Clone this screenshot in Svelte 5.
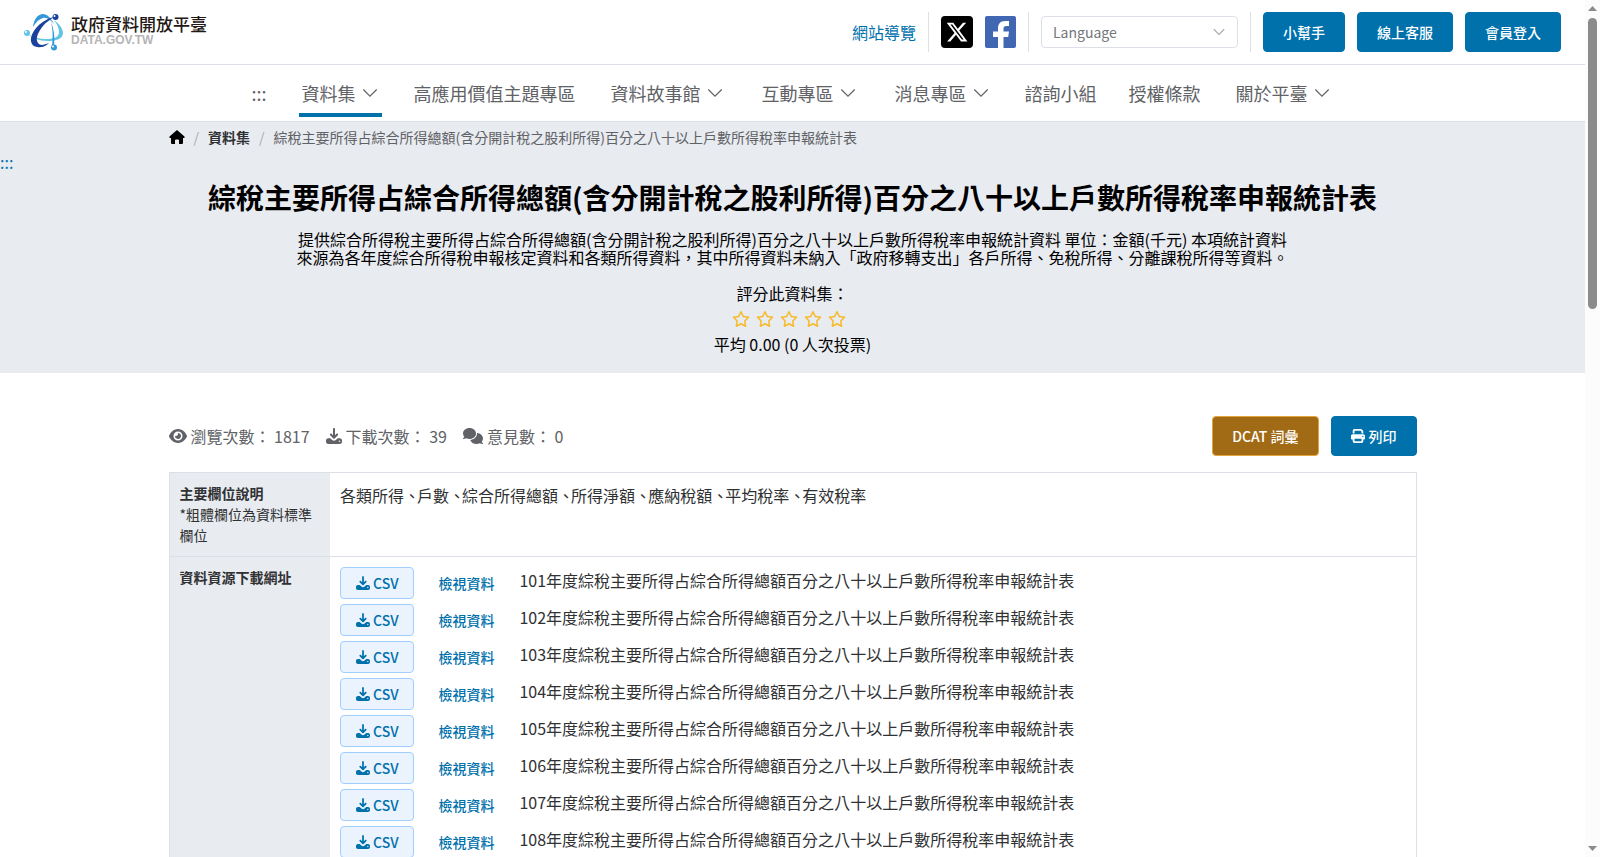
<script>
	const menu = [
		{ label: '資料集', sub: true, active: true },
		{ label: '高應用價值主題專區' },
		{ label: '資料故事館', sub: true },
		{ label: '互動專區', sub: true },
		{ label: '消息專區', sub: true },
		{ label: '諮詢小組' },
		{ label: '授權條款' },
		{ label: '關於平臺', sub: true },
	];

	const title = '綜稅主要所得占綜合所得總額(含分開計稅之股利所得)百分之八十以上戶數所得稅率申報統計表';
	const fields = ['各類所得', '戶數', '綜合所得總額', '所得淨額', '應納稅額', '平均稅率', '有效稅率'];
	const years = [101, 102, 103, 104, 105, 106, 107, 108];
	const stars = [1, 2, 3, 4, 5];

	let score = $state(0);
	let lang = $state('');
</script>

{#snippet chevron()}
	<svg class="chevron" viewBox="0 0 18 18" aria-hidden="true">
		<path d="M2.300 5.500 9 12.200l6.700-6.700" />
	</svg>
{/snippet}

{#snippet download()}
	<svg class="icon" viewBox="0 0 512 512" aria-hidden="true">
		<path d="M288 32c0-17.700-14.300-32-32-32s-32 14.300-32 32V232.700l-45.400-45.400c-12.500-12.500-32.800-12.500-45.300 0s-12.500 32.800 0 45.300l100 100c12.500 12.500 32.800 12.500 45.300 0l100-100c12.500-12.500 12.500-32.800 0-45.300s-32.800-12.500-45.300 0L288 232.700V32zM72 328c-40 0-72 32-72 72v40c0 40 32 72 72 72H440c40 0 72-32 72-72V400c0-40-32-72-72-72H376l-62 58c-32 30-84 30-116 0L136 328H72zm360 68a24 24 0 1 1 0 48 24 24 0 1 1 0-48z" />
	</svg>
{/snippet}

<div class="page">
	<header>
		<a class="logo" href="#home">
			<svg viewBox="0 0 40 37" aria-hidden="true">
				<path d="M9 13C10 5 14 0 19 0c4 0 8 4 11 10-4-5-8-7-11-6-4 1-7 4-10 9z" fill="#3498d8" />
				<path d="M30 6c4 3 9 8 9 13 0 6-7 8-15 8C15 27 8 24 4 20c6 4 12 5 19 5 7 0 12-2 12-7 0-4-2-8-5-12z" fill="#62c4e4" />
				<path d="M30 3C20 5 9 14 7 24c-1 7 4 10 10 9 3 0 6-2 8-4-5 2-9 3-11 0-3-4 0-11 5-17 3-4 7-6 11-9z" fill="#1a429c" />
				<path d="M27 8c3 7 4 15 3 24h-2c1-9 1-16-1-24z" fill="#3498d8" />
				<circle cx="31.500" cy="3" r="3" fill="#1a429c" />
				<circle cx="3" cy="19" r="3" fill="#62c4e4" />
				<circle cx="30" cy="33.500" r="3" fill="#3498d8" />
				<circle cx="30.500" cy="2" r="1" fill="#fff" />
				<circle cx="2" cy="18" r="1" fill="#fff" />
				<circle cx="29" cy="32.500" r="1" fill="#fff" />
			</svg>
			<span class="logo-text">
				<strong>政府資料開放平臺</strong>
				<span>DATA.GOV.TW</span>
			</span>
		</a>

		<div class="tools">
			<a href="#sitemap">網站導覽</a>
			<div class="divider"></div>
			<a class="social" href="#x" aria-label="X">
				<svg viewBox="0 0 32 32">
					<rect width="32" height="32" rx="4" />
					<path transform="translate(4.500 4.500) scale(.96)" fill="#fff" d="M18.244 2.250h3.308l-7.227 8.260 8.502 11.240H16.170l-5.214-6.817L4.990 21.750H1.680l7.730-8.835L1.254 2.250H8.080l4.713 6.231zm-1.161 17.520h1.833L7.084 4.126H5.117z" />
				</svg>
			</a>
			<a class="social facebook" href="#facebook" aria-label="Facebook">
				<svg viewBox="0 0 31 32">
					<rect width="31" height="32" rx="2" fill="#4267b2" />
					<path fill="#fff" d="M13 32V21H8v-5.500h5v-3.300C13 7.800 15.600 5 20 5h4v5h-2.600c-2.100 0-2.900 1-2.900 2.700v2.800H24L23.200 21h-4.700v11z" />
				</svg>
			</a>
			<div class="divider"></div>
			<div class="lang">
				<select aria-label="Language" bind:value={lang}>
					<option value="">Language</option>
					<option value="zh">繁體中文</option>
					<option value="en">English</option>
				</select>
				{@render chevron()}
			</div>
			<div class="divider"></div>
			<button class="btn">小幫手</button>
			<button class="btn">線上客服</button>
			<button class="btn">會員登入</button>
		</div>
	</header>

	<nav>
		<a href="#nav">:::</a>
		{#each menu as item}
			<a href="#menu" class:sub={item.sub} class:active={item.active}>
				{item.label}
				{#if item.sub}
					{@render chevron()}
				{/if}
			</a>
		{/each}
	</nav>

	<section class="banner">
		<div class="container breadcrumb">
			<a href="#home" aria-label="首頁">
				<svg viewBox="0 0 15 14"><path d="M7.500 0 15 6.500V8h-1.500v5q0 1-1 1H9.500v-3.500q0-1-1-1h-2q-1 0-1 1V14h-3q-1 0-1-1V8H0V6.500z" /></svg>
			</a>
			<i>/</i>
			<a href="#dataset">資料集</a>
			<i>/</i>
			<span>{title}</span>
		</div>
		<a class="anchor" href="#main">:::</a>
		<div class="container intro">
			<h1>{title}</h1>
			<p>提供綜合所得稅主要所得占綜合所得總額(含分開計稅之股利所得)百分之八十以上戶數所得稅率申報統計資料 單位：金額(千元) 本項統計資料來源為各年度綜合所得稅申報核定資料和各類所得資料，其中所得資料未納入「政府移轉支出」各戶所得、免稅所得、分離課稅所得等資料。</p>
			<div>評分此資料集：</div>
			<div class="stars">
				{#each stars as n}
					<button aria-label="{n} 分" onclick={() => score = n}>
						<svg viewBox="0 0 576 512">
							<path d="M287.900 0c9.200 0 17.600 5.200 21.600 13.500l68.600 141.300 153.200 22.600c9 1.300 16.500 7.600 19.300 16.300s.5 18.100-5.900 24.500L433.600 328.400l26.200 155.600c1.500 9-2.200 18.100-9.700 23.500s-17.300 6-25.300 1.700l-137-73.200L151 509.100c-8.100 4.300-17.900 3.700-25.300-1.700s-11.200-14.500-9.700-23.500l26.200-155.600L31.100 218.200c-6.500-6.400-8.700-15.900-5.900-24.500s10.300-14.900 19.300-16.300l153.200-22.600L266.300 13.500C270.400 5.200 278.700 0 287.900 0zm0 79L235.400 187.200c-3.500 7.100-10.200 12.100-18.100 13.300L99 217.900 184.900 303c5.500 5.500 8.100 13.300 6.800 21L171.400 443.700l105.200-56.200c7.100-3.800 15.600-3.800 22.600 0l105.200 56.200L384.200 324.100c-1.300-7.700 1.200-15.500 6.800-21l85.900-85.100L358.600 200.500c-7.800-1.200-14.600-6.100-18.100-13.300L287.900 79z" />
						</svg>
					</button>
				{/each}
			</div>
			<div>平均 0.00 (0 人次投票)</div>
		</div>
	</section>

	<main class="container">
		<div class="meta">
			<span>
				<svg class="icon" viewBox="0 0 576 512" aria-hidden="true"><path d="M288 32c-80.800 0-145.500 36.800-192.600 80.600C48.600 156 17.300 208 2.500 243.700c-3.300 7.900-3.300 16.700 0 24.600C17.300 304 48.600 356 95.400 399.400C142.500 443.200 207.200 480 288 480s145.500-36.800 192.600-80.600c46.800-43.500 78.100-95.400 93-131.100c3.300-7.900 3.300-16.700 0-24.600c-14.900-35.700-46.200-87.700-93-131.100C433.500 68.800 368.800 32 288 32zM144 256a144 144 0 1 1 288 0 144 144 0 1 1 -288 0zm144-64c0 35.300-28.700 64-64 64c-7.100 0-13.900-1.200-20.300-3.300c-5.500-1.800-11.900 1.600-11.700 7.400c.3 6.900 1.300 13.800 3.200 20.700c13.700 51.200 66.400 81.600 117.600 67.900s81.600-66.400 67.900-117.600c-11.100-41.500-47.800-69.400-88.600-71.100c-5.800-.2-9.200 6.100-7.400 11.700c2.100 6.400 3.300 13.200 3.300 20.300z" /></svg>
				瀏覽次數： 1817
			</span>
			<span>{@render download()} 下載次數： 39</span>
			<span>
				<svg class="icon" viewBox="0 0 640 512" aria-hidden="true"><path d="M208 352c114.900 0 208-78.800 208-176S322.900 0 208 0S0 78.800 0 176c0 38.600 14.700 74.300 39.600 103.400c-3.500 9.400-8.700 17.700-14.200 24.700c-4.800 6.200-9.700 11-13.300 14.300c-1.800 1.600-3.300 2.900-4.300 3.700c-.5 .4-.9 .7-1.100 .8l-.2 .2C1 327.200-1.400 334.400 .8 340.900S9.100 352 16 352c21.800 0 43.800-5.600 62.100-12.500c9.200-3.500 17.800-7.400 25.200-11.400C134.100 343.300 169.800 352 208 352zM448 176c0 112.300-99.100 196.900-216.500 207C255.800 457.400 336.400 512 432 512c38.200 0 73.900-8.700 104.700-23.900c7.500 4 16 7.900 25.200 11.400c18.300 6.900 40.300 12.500 62.100 12.500c6.900 0 13.100-4.500 15.200-11.100c2.100-6.600-.2-13.800-5.800-17.900l-.2-.2c-.2-.2-.6-.4-1.100-.8c-1-.8-2.500-2-4.300-3.700c-3.600-3.300-8.500-8.100-13.300-14.300c-5.500-7-10.700-15.400-14.200-24.700c24.900-29 39.600-64.700 39.600-103.400c0-92.800-84.900-168.900-192.600-175.500c.4 5.100 .6 10.300 .6 15.500z" /></svg>
				意見數： 0
			</span>
			<div class="actions">
				<button class="btn dcat">DCAT 詞彙</button>
				<button class="btn">
					<svg class="icon" viewBox="0 0 512 512" aria-hidden="true"><path d="M128 0C92.700 0 64 28.700 64 64v96h64V64H354.700L384 93.300V160h64V93.300c0-17-6.700-33.300-18.700-45.300L400 18.700C388 6.700 371.700 0 354.700 0H128zM384 352v32 64H128V384 368 352H384zm64 32h32c17.700 0 32-14.300 32-32V256c0-35.300-28.700-64-64-64H64c-35.300 0-64 28.700-64 64v96c0 17.700 14.300 32 32 32H64v64c0 35.300 28.700 64 64 64H384c35.300 0 64-28.700 64-64V384zM432 248a24 24 0 1 1 0 48 24 24 0 1 1 0-48z" /></svg>
					列印
				</button>
			</div>
		</div>

		<table>
			<tbody>
				<tr>
					<th scope="row">主要欄位說明<small>*粗體欄位為資料標準欄位</small></th>
					<td>
						{#each fields as field, i}{#if i > 0}<span class="comma">、</span>{/if}{field}{/each}
					</td>
				</tr>
				<tr>
					<th scope="row">資料資源下載網址</th>
					<td>
						<ul>
							{#each years as year}
								<li>
									<button class="csv">{@render download()} CSV</button>
									<a href="#preview">檢視資料</a>
									<span>{year}年度綜稅主要所得占綜合所得總額百分之八十以上戶數所得稅率申報統計表</span>
								</li>
							{/each}
						</ul>
					</td>
				</tr>
			</tbody>
		</table>
	</main>

	<div class="scrollbar" aria-hidden="true">
		<svg viewBox="0 0 9 5"><path d="M4.500 0 9 5H0z" /></svg>
		<div class="thumb"></div>
		<svg viewBox="0 0 9 5"><path d="M0 0h9L4.500 5z" /></svg>
	</div>
</div>

<style>
	:global(body) {
		font-family: "Noto Sans CJK TC", sans-serif;
		font-size: 16px;
		color: #303133;
		background: #fff;
	}

	* {
		box-sizing: border-box;
	}

	.page {
		height: 100vh;
		padding-right: 15px;
		overflow: hidden;
	}

	a {
		color: #0071ab;
		text-decoration: none;
	}

	svg {
		display: block;
	}

	button {
		font-family: inherit;
		cursor: pointer;
	}

	.icon {
		height: 1em;
		fill: currentColor;
	}

	.chevron {
		width: 18px;
		height: 18px;
		fill: none;
		stroke: currentColor;
		stroke-width: 1.2;
	}

	.container {
		max-width: 1248px;
		margin: 0 auto;
	}

	header {
		display: flex;
		align-items: center;
		justify-content: space-between;
		height: 65px;
		padding: 0 24px;
		border-bottom: 1px solid #dcdfe6;
	}

	.logo {
		display: flex;
		align-items: center;
		gap: 7px;
	}

	.logo svg {
		width: 40px;
		height: 37px;
	}

	.logo-text {
		display: flex;
		flex-direction: column;
		padding-bottom: 4px;
		color: #b5b5b6;
		font: bold 12px/14px "Liberation Sans", sans-serif;
	}

	.logo-text strong {
		color: #231815;
		font: 500 17px/19px "Noto Sans CJK TC", sans-serif;
	}

	.tools {
		display: flex;
		align-items: center;
		gap: 12px;
	}

	.divider {
		width: 1px;
		height: 40px;
		background: #dcdfe6;
	}

	.social svg {
		width: 32px;
		height: 32px;
	}

	.facebook svg {
		width: 31px;
	}

	.lang {
		display: grid;
		align-items: center;
		width: 197px;
		color: #a8abb2;
	}

	.lang select,
	.lang .chevron {
		grid-area: 1 / 1;
	}

	.lang .chevron {
		width: 14px;
		height: 14px;
		margin-right: 12px;
		justify-self: end;
		stroke-width: 1.5;
		pointer-events: none;
	}

	select {
		width: 100%;
		height: 32px;
		padding: 0 11px;
		appearance: none;
		border: 1px solid #dcdfe6;
		border-radius: 4px;
		background: #fff;
		color: #73767a;
		font: 14px "Noto Sans CJK TC", sans-serif;
	}

	.btn {
		display: flex;
		align-items: center;
		gap: 4px;
		height: 40px;
		padding: 0 19px;
		border: 1px solid #0071ab;
		border-radius: 4px;
		background: #0071ab;
		color: #fff;
		font-size: 14px;
		font-weight: 500;
	}

	.dcat {
		border-color: #e6a23c;
		background: #a16a15;
	}

	nav {
		display: flex;
		justify-content: center;
		gap: 32px;
		height: 57px;
		padding-top: 8px;
		border-bottom: 1px solid #dcdfe6;
	}

	nav a {
		display: flex;
		align-items: center;
		gap: 5px;
		height: 44px;
		color: #606266;
		font-size: 18px;
		border-bottom: 4px solid transparent;
	}

	nav .sub {
		padding: 0 3px;
	}

	nav .active {
		border-color: #0071ab;
	}

	.banner {
		height: 251px;
		background: #e8ebf0;
		color: #000;
	}

	.breadcrumb {
		display: flex;
		align-items: center;
		height: 30px;
		color: #606266;
		font-size: 14px;
	}

	.breadcrumb a {
		color: #303133;
		font-weight: bold;
	}

	.breadcrumb svg {
		width: 16px;
		height: 14px;
		fill: #000;
	}

	.breadcrumb i {
		margin: 0 9px;
		color: #a8abb2;
		font-style: normal;
	}

	.anchor {
		display: block;
		line-height: 20px;
	}

	.intro {
		text-align: center;
		line-height: 24px;
	}

	h1 {
		margin: 0;
		font-size: 28px;
		line-height: 50px;
	}

	.intro p {
		max-width: 1000px;
		margin: 8px auto 15px;
		line-height: 18px;
	}

	.stars {
		display: flex;
		justify-content: center;
		gap: 6px;
		padding: 6px 8px 5px 0;
	}

	.stars button {
		padding: 0;
		border: 0;
		background: none;
	}

	.stars svg {
		width: 18px;
		height: 16px;
		fill: #f7ba2a;
	}

	.meta {
		display: flex;
		align-items: center;
		gap: 16px;
		padding: 43px 0 16px;
		color: #606266;
	}

	.meta span {
		display: flex;
		align-items: center;
		gap: 4px;
	}

	.actions {
		display: flex;
		gap: 12px;
		margin-left: auto;
	}

	table {
		width: 100%;
		border: 1px solid #dcdfe6;
		border-collapse: collapse;
	}

	tr {
		border-bottom: 1px solid #dcdfe6;
	}

	th,
	td {
		padding: 10px;
		text-align: left;
		vertical-align: top;
		line-height: 24px;
	}

	th {
		width: 161px;
		background: #e8ebf0;
		font-size: 14px;
		line-height: 21px;
	}

	small {
		display: block;
		font-size: 14px;
		font-weight: normal;
	}

	.comma {
		margin-right: -3px;
	}

	ul {
		margin: 0;
		padding: 0;
		list-style: none;
	}

	li {
		display: flex;
		margin-bottom: 5px;
		line-height: 26px;
	}

	li a {
		margin: 0 25px 0 24px;
		font-size: 14px;
		font-weight: 500;
		line-height: 32px;
	}

	.csv {
		display: flex;
		align-items: center;
		gap: 3px;
		height: 32px;
		padding: 0 15px;
		border: 1px solid #a0cfff;
		border-radius: 4px;
		background: #ebf3ff;
		color: #0071ab;
		font-size: 14px;
		font-weight: 500;
	}

	.scrollbar {
		position: fixed;
		top: 0;
		right: 0;
		bottom: 0;
		display: flex;
		flex-direction: column;
		align-items: center;
		width: 15px;
		padding: 6px 0;
		background: #fcfcfc;
	}

	.scrollbar svg {
		width: 9px;
		height: 5px;
		fill: #8b8b8b;
	}

	.thumb {
		width: 9px;
		height: 34vh;
		margin: 7px 0 auto;
		border-radius: 5px;
		background: #8b8b8b;
	}
</style>
